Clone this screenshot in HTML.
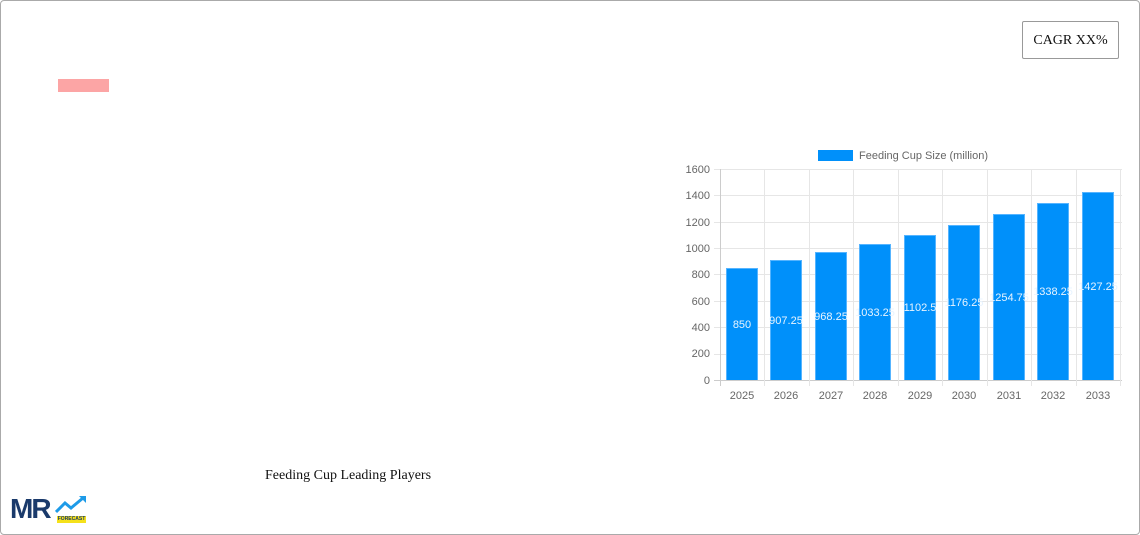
<!DOCTYPE html>
<html><head><meta charset="utf-8"><style>
body{margin:0;width:1140px;height:535px;background:#fff;position:relative;overflow:hidden;font-family:"Liberation Sans",sans-serif}
.frame{position:absolute;left:0;top:0;width:1138px;height:533px;border:1px solid #aaa;border-radius:4px}
.a{position:absolute}
.hg{position:absolute;left:714px;width:408px;height:1px;background:#e6e6e6}
.vg{position:absolute;top:169px;width:1px;height:217px;background:#e6e6e6}
.yl{position:absolute;left:670px;width:40px;text-align:right;font-size:11px;color:#666}
.xl{position:absolute;top:390px;width:44px;text-align:center;font-size:11px;color:#666}
.bar{position:absolute;width:32px;background:#0090fa;border:1px solid #55b4ff;box-sizing:border-box;border-bottom:none}
.bl{position:absolute;width:44px;text-align:center;font-size:11px;color:#e8f4ff;white-space:nowrap;overflow:hidden}
</style></head><body>
<div class="frame"></div>
<div class="a" style="left:1022px;top:21px;width:95px;height:36px;border:1px solid #999;border-radius:2px;font-family:'Liberation Serif',serif;font-size:14px;line-height:37px;text-align:center;color:#111">CAGR XX%</div>
<div class="a" style="left:58px;top:79px;width:51px;height:13px;background:#fca5a5"></div>

<div class="a" style="left:818px;top:150px;width:35px;height:11px;background:#0090fa"></div>
<div class="a" style="left:859px;top:150px;font-size:11px;color:#666">Feeding Cup Size (million)</div>

<div class="hg" style="top:169px"></div><div class="hg" style="top:195px"></div><div class="hg" style="top:222px"></div><div class="hg" style="top:248px"></div><div class="hg" style="top:274px"></div><div class="hg" style="top:301px"></div><div class="hg" style="top:327px"></div><div class="hg" style="top:354px"></div>
<div class="hg" style="top:380px;background:#ccc"></div>
<div class="vg" style="left:720px;background:#ccc"></div><div class="vg" style="left:764px"></div><div class="vg" style="left:809px"></div><div class="vg" style="left:853px"></div><div class="vg" style="left:898px"></div><div class="vg" style="left:942px"></div><div class="vg" style="left:987px"></div><div class="vg" style="left:1031px"></div><div class="vg" style="left:1076px"></div><div class="vg" style="left:1120px"></div>

<div class="yl" style="top:164px">1600</div><div class="yl" style="top:190px">1400</div><div class="yl" style="top:217px">1200</div><div class="yl" style="top:243px">1000</div><div class="yl" style="top:269px">800</div><div class="yl" style="top:296px">600</div><div class="yl" style="top:322px">400</div><div class="yl" style="top:348px">200</div><div class="yl" style="top:375px">0</div>

<div class="bar" style="left:726px;top:268px;height:112px"></div>
<div class="bar" style="left:770px;top:260px;height:120px"></div>
<div class="bar" style="left:815px;top:252px;height:128px"></div>
<div class="bar" style="left:859px;top:244px;height:136px"></div>
<div class="bar" style="left:904px;top:235px;height:145px"></div>
<div class="bar" style="left:948px;top:225px;height:155px"></div>
<div class="bar" style="left:993px;top:214px;height:166px"></div>
<div class="bar" style="left:1037px;top:203px;height:177px"></div>
<div class="bar" style="left:1082px;top:192px;height:188px"></div>

<div class="bl" style="left:720px;top:319px">850</div>
<div class="bl" style="left:764px;top:315px">907.25</div>
<div class="bl" style="left:809px;top:311px">968.25</div>
<div class="bl" style="left:853px;top:307px">1033.25</div>
<div class="bl" style="left:898px;top:302px">1102.5</div>
<div class="bl" style="left:942px;top:297px">1176.25</div>
<div class="bl" style="left:987px;top:292px">1254.75</div>
<div class="bl" style="left:1031px;top:286px">1338.25</div>
<div class="bl" style="left:1076px;top:281px">1427.25</div>

<div class="xl" style="left:720px">2025</div><div class="xl" style="left:764px">2026</div><div class="xl" style="left:809px">2027</div><div class="xl" style="left:853px">2028</div><div class="xl" style="left:898px">2029</div><div class="xl" style="left:942px">2030</div><div class="xl" style="left:987px">2031</div><div class="xl" style="left:1031px">2032</div><div class="xl" style="left:1076px">2033</div>

<div class="a" style="left:265px;top:468px;font-family:'Liberation Serif',serif;font-size:14px;color:#111">Feeding Cup Leading Players</div>

<div class="a" style="left:10px;top:493px;font-size:28px;font-weight:bold;color:#1a3a6b;letter-spacing:-2px;line-height:32px">MR</div>
<svg class="a" style="left:55px;top:495px" width="33" height="20" viewBox="0 0 33 20"><path d="M1 17 L10 8 L16 13 L28 3" stroke="#1e9be8" stroke-width="3" fill="none"/><path d="M24 1 L31 1 L31 8 Z" fill="#1e9be8"/></svg>
<div class="a" style="left:57px;top:516px;width:29px;height:7px;background:#f5e11b;font-size:5px;font-weight:bold;color:#1a3a6b;text-align:center;line-height:7px">FORECAST</div>
</body></html>
